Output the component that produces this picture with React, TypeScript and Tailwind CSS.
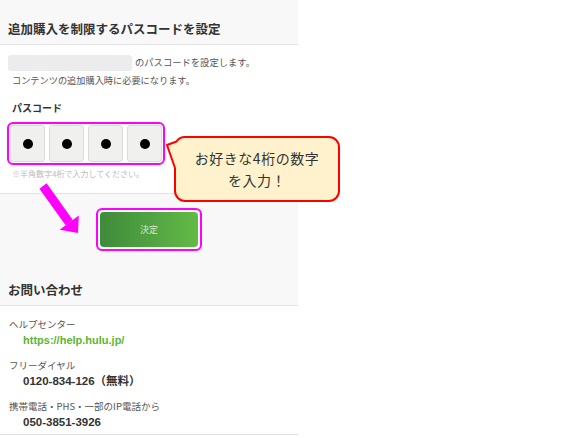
const jp = { fontFamily: '"Noto Sans CJK JP", "Noto Sans", sans-serif' };
const latin = { fontFamily: '"Liberation Sans", "Noto Sans CJK JP", sans-serif' };

function Dot() {
  return (
    <div className="w-[35px] h-[37px] bg-[#f0f0ee] border border-[#dcdcdc] rounded-[3px] flex items-center justify-center">
      <div className="w-[10px] h-[10px] rounded-full bg-black" />
    </div>
  );
}

function Contact({ label, value, link }: { label: string; value: string; link?: boolean }) {
  return (
    <div className="flex flex-col">
      <div className="text-[9.5px] leading-[15px] text-[#555]">{label}</div>
      <div
        style={latin}
        className={
          "ml-[14px] leading-[16px] font-bold " +
          (link ? "text-[11px] text-[#5cb531]" : "text-[11.5px] text-[#333]")
        }
      >
        {value}
      </div>
    </div>
  );
}

export default function App() {
  return (
    <div className="relative w-[581px] h-[438px] bg-white overflow-hidden" style={jp}>
      <div className="w-[298px] flex flex-col">
        {/* header */}
        <div className="h-[45px] bg-[#f8f8f8] border-b border-[#e2e2e2] px-[8px] pt-[20px]">
          <h1 className="text-[12.5px] leading-[18px] font-bold text-[#333]">
            追加購入を制限するパスコードを設定
          </h1>
        </div>

        {/* passcode form */}
        <div className="bg-white border-b border-[#e2e2e2] px-[8px] pt-[10px] pb-[13px]">
          <div className="flex items-center gap-[3px]">
            <div className="w-[124px] h-[16px] rounded-[3px] bg-[#ececec]" />
            <span className="text-[9.3px] text-[#555]">のパスコードを設定します。</span>
          </div>
          <p className="ml-[4px] mt-[2px] text-[9.2px] leading-[14px] text-[#555]">
            コンテンツの追加購入時に必要になります。
          </p>
          <div className="ml-[4px] mt-[14px] text-[10px] leading-[14px] font-bold text-[#333]">パスコード</div>
          <div className="-ml-[1px] mt-[7px] inline-flex gap-[4px] p-[1px] border-2 border-[#ff00ff] rounded-[6px]">
            <Dot />
            <Dot />
            <Dot />
            <Dot />
          </div>
          <p className="ml-[4px] mt-[3px] text-[8px] leading-[12px] text-[#bbb]">※半角数字4桁で入力してください。</p>
        </div>

        {/* submit + heading */}
        <div className="bg-[#f8f8f8] border-b border-[#e2e2e2] pt-[14px] pb-[6px] px-[8px]">
          <div className="flex justify-center">
            <div className="p-[2px] border-2 border-[#ff00ff] rounded-[6px]">
              <button className="w-[98px] h-[35px] rounded-[4px] bg-gradient-to-r from-[#3e8b3c] to-[#63ba46] text-[9px] text-[#d4ead0]">
                決定
              </button>
            </div>
          </div>
          <h2 className="mt-[30px] text-[12.5px] leading-[18px] font-bold text-[#333]">お問い合わせ</h2>
        </div>

        {/* contacts */}
        <div className="bg-white border-b border-[#e2e2e2] pl-[9px] pt-[11px] pb-[4px] flex flex-col gap-[10px]">
          <Contact label="ヘルプセンター" value="https://help.hulu.jp/" link />
          <Contact label="フリーダイヤル" value="0120-834-126（無料）" />
          <Contact label="携帯電話・PHS・一部のIP電話から" value="050-3851-3926" />
        </div>
      </div>

      {/* annotations */}
      <svg className="absolute inset-0 pointer-events-none" width="581" height="438" viewBox="0 0 581 438">
        <polygon points="46.6,183.3 39.4,188.7 65.6,225.3 72.8,219.9" fill="#ff00ff" />
        <polygon points="78,233 78.8,215.4 59.6,229.8" fill="#ff00ff" />
        <path
          d="M 185 137 H 329 A 10 10 0 0 1 339 147 V 191 A 10 10 0 0 1 329 201 H 185 A 10 10 0 0 1 175 191 V 168 L 167 145 L 176.5 141.5 A 10 10 0 0 1 185 137 Z"
          fill="#fff2cc"
          stroke="#ff0000"
          strokeWidth="2"
          strokeLinejoin="round"
        />
      </svg>
      <div className="absolute left-[175px] top-[137px] w-[164px] h-[64px] flex flex-col items-center justify-center text-[14px] leading-[22px] tracking-[0.5px] text-[#333]">
        <span>お好きな4桁の数字</span>
        <span>を入力！</span>
      </div>
    </div>
  );
}
